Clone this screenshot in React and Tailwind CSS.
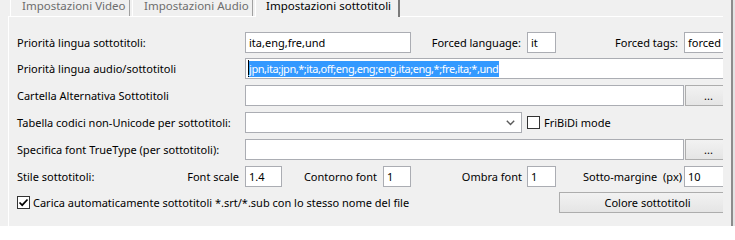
import React from "react";

const font = { fontFamily: '"Segoe UI", "Noto Sans", sans-serif' };

function Box({ w, children, className = "" }) {
  return (
    <div
      className={`h-[21px] shrink-0 bg-white border border-[#abadb3] flex items-center pl-[3px] whitespace-nowrap overflow-hidden ${w} ${className}`}
    >
      {children}
    </div>
  );
}

function Btn({ w, children }) {
  return (
    <div
      className={`h-[21px] shrink-0 border border-[#adadad] bg-gradient-to-b from-[#f2f2f2] to-[#e5e5e5] flex items-center justify-center whitespace-nowrap ${w}`}
    >
      {children}
    </div>
  );
}

function Check({ checked }) {
  return (
    <div className="w-[13px] h-[13px] shrink-0 bg-white border border-[#333333] flex items-center justify-center">
      {checked && (
        <svg width="11" height="11" viewBox="0 0 11 11">
          <polyline points="1.5,5.5 4.2,8.2 9.5,2.5" fill="none" stroke="#000" strokeWidth="1.7" />
        </svg>
      )}
    </div>
  );
}

export default function App() {
  return (
    <div
      className="w-[735px] h-[226px] bg-[#f0f0f0] flex overflow-hidden text-[11px] text-black leading-none whitespace-nowrap"
      style={font}
    >
      <div className="w-[731px] shrink-0 flex flex-col">
        {/* tab strip */}
        <div className="h-[16px] shrink-0 flex pl-[10px] relative z-10">
          <div className="w-[120px] h-[16px] border-l border-white border-r border-r-[#a0a0a0] bg-[#f0f0f0] text-[#6d6d6d] pl-[11px]">
            <div className="leading-[12px] text-[11.5px]">Impostazioni Video</div>
          </div>
          <div className="w-[121px] ml-[2px] h-[16px] border-l border-white border-r border-r-[#a0a0a0] bg-[#f0f0f0] text-[#6d6d6d] pl-[11px]">
            <div className="leading-[12px] text-[11.5px]">Impostazioni Audio</div>
          </div>
          <div className="w-[145px] ml-[2px] h-[17px] border-l border-white border-r-2 border-r-[#7a7a7a] bg-[#f0f0f0] text-black pl-[10px]">
            <div className="leading-[12px] text-[11.5px]">Impostazioni sottotitoli</div>
          </div>
        </div>
        {/* panel */}
        <div className="ml-[8px] w-[715px] flex-1 border-l border-t border-white overflow-hidden pl-[8px] flex flex-col">
          {/* row 1 */}
          <div className="mt-[15px] h-[21px] flex items-center shrink-0">
            <div className="w-[228px] shrink-0">Priorità lingua sottotitoli:</div>
            <Box w="w-[166px]">ita,eng,fre,und</Box>
            <div className="w-[116px] shrink-0 text-right pr-[6px]">Forced language:</div>
            <Box w="w-[29px]">it</Box>
            <div className="w-[128px] shrink-0 text-right pr-[6px]">Forced tags:</div>
            <Box w="w-[60px]">forced</Box>
          </div>
          {/* row 2 */}
          <div className="mt-[5px] h-[21px] flex items-center shrink-0">
            <div className="w-[228px] shrink-0">Priorità lingua audio/sottotitoli</div>
            <div className="h-[21px] w-[500px] shrink-0 bg-white border border-[#abadb3] flex items-center pl-[2px] whitespace-nowrap overflow-hidden">
              <div className="w-px h-[17px] bg-black shrink-0" />
              <div className="bg-[#3399ff] text-white h-[16px] flex items-center pr-[1px] tracking-[-0.45px]">
                jpn,ita;jpn,*;ita,off;eng,eng;eng,ita;eng,*;fre,ita;*,und
              </div>
            </div>
          </div>
          {/* row 3 */}
          <div className="mt-[6px] h-[21px] flex items-center shrink-0">
            <div className="w-[228px] shrink-0">Cartella Alternativa Sottotitoli</div>
            <Box w="w-[439px]" />
            <div className="w-px shrink-0" />
            <Btn w="w-[47px]">...</Btn>
          </div>
          {/* row 4 */}
          <div className="mt-[6px] h-[21px] flex items-center shrink-0">
            <div className="w-[228px] shrink-0">Tabella codici non-Unicode per sottotitoli:</div>
            <div className="h-[21px] w-[277px] shrink-0 bg-white border border-[#abadb3] flex items-center justify-end pr-[6px]">
              <svg width="9" height="6" viewBox="0 0 9 6">
                <polyline points="0.8,0.8 4.5,4.5 8.2,0.8" fill="none" stroke="#5a5a5a" strokeWidth="1.4" />
              </svg>
            </div>
            <div className="w-[5px] shrink-0" />
            <Check />
            <div className="ml-[4px] whitespace-nowrap">FriBiDi mode</div>
          </div>
          {/* row 5 */}
          <div className="mt-[6px] h-[21px] flex items-center shrink-0">
            <div className="w-[228px] shrink-0">Specifica font TrueType (per sottotitoli):</div>
            <Box w="w-[439px]" />
            <div className="w-px shrink-0" />
            <Btn w="w-[47px]">...</Btn>
          </div>
          {/* row 6 */}
          <div className="mt-[6px] h-[21px] flex items-center shrink-0">
            <div className="w-[228px] shrink-0 flex justify-between pr-[6px]">
              <span>Stile sottotitoli:</span>
              <span>Font scale</span>
            </div>
            <Box w="w-[37px]">1.4</Box>
            <div className="w-[101px] shrink-0 text-right pr-[6px]">Contorno font</div>
            <Box w="w-[28px]">1</Box>
            <div className="w-[116px] shrink-0 text-right pr-[5px]">Ombra font</div>
            <Box w="w-[29px]">1</Box>
            <div className="w-[128px] shrink-0 text-right pr-[2px] whitespace-pre">Sotto-margine  (px)</div>
            <Box w="w-[60px]">10</Box>
          </div>
          {/* row 7 */}
          <div className="mt-[5px] h-[21px] flex items-center shrink-0">
            <Check checked />
            <div className="ml-[3px] w-[526px] shrink-0 whitespace-nowrap">
              Carica automaticamente sottotitoli *.srt/*.sub con lo stesso nome del file
            </div>
            <Btn w="w-[177px]">Colore sottotitoli</Btn>
          </div>
        </div>
      </div>
      <div className="w-[2px] shrink-0 bg-[#8c8c8c]" />
      <div className="w-[2px] shrink-0 bg-[#e3e3e3]" />
    </div>
  );
}
